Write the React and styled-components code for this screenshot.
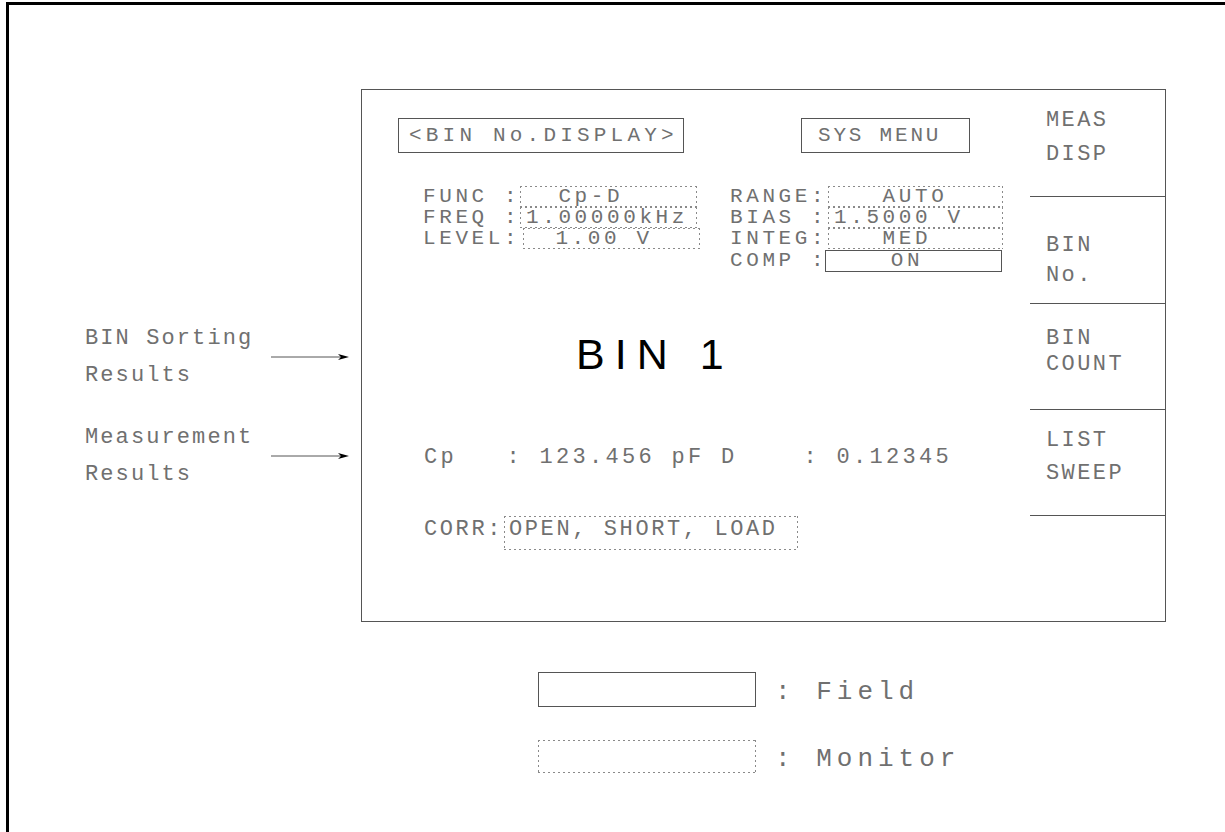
import React from 'react'
import styled, { createGlobalStyle, css } from 'styled-components'

const GlobalStyle = createGlobalStyle`
  html, body {
    margin: 0;
    padding: 0;
    background: #fff;
    overflow: hidden;
  }
  body {
    font-family: "Liberation Mono", "DejaVu Sans Mono", monospace;
    color: #707070;
  }
`

// dotted outline used for "monitor" boxes
const dotted = css`
  background-image:
    repeating-linear-gradient(90deg, #8a8a8a 0 2px, transparent 2px 5px),
    repeating-linear-gradient(90deg, #8a8a8a 0 2px, transparent 2px 5px),
    repeating-linear-gradient(180deg, #8a8a8a 0 2px, transparent 2px 5px),
    repeating-linear-gradient(180deg, #8a8a8a 0 2px, transparent 2px 5px);
  background-size: 100% 1px, 100% 1px, 1px 100%, 1px 100%;
  background-position: 0 0, 0 100%, 0 0, 100% 0;
  background-repeat: no-repeat;
`

const Frame = styled.div`
  margin: 2px 0 0 6px;
  height: 830px;
  box-sizing: border-box;
  border-left: 3px solid #000;
  border-top: 3px solid #000;
`

const Top = styled.div`
  display: flex;
  margin-top: 84px;
`

const Annotations = styled.div`
  width: 352px;
  flex-shrink: 0;
  box-sizing: border-box;
  padding: 231px 0 0 76px;
`

const AnnGroup = styled.div`
  display: flex;
  align-items: center;
  margin-top: ${(p) => p.$gap || 0}px;
`

const AnnText = styled.div`
  width: 186px;
  font-size: 22px;
  line-height: 37px;
  letter-spacing: 2.1px;
  white-space: pre;
`

const Display = styled.div`
  display: flex;
  width: 805px;
  height: 533px;
  box-sizing: border-box;
  border: 1px solid #555;
`

const Main = styled.div`
  width: 668px;
  box-sizing: border-box;
  padding: 28px 0 0 36px;
`

const Header = styled.div`
  display: flex;
`

const HeadBox = styled.div`
  width: ${(p) => p.$w}px;
  height: 35px;
  margin-left: ${(p) => p.$ml || 0}px;
  box-sizing: border-box;
  border: 1px solid #555;
  display: flex;
  align-items: center;
  padding-left: ${(p) => p.$pl}px;
  font-size: 21px;
  letter-spacing: ${(p) => p.$ls}px;
  white-space: pre;
`

const Params = styled.div`
  display: flex;
  margin: 33px 0 0 25px;
`

const ParamCol = styled.div`
  margin-left: ${(p) => p.$ml || 0}px;
`

const ParamRow = styled.div`
  display: flex;
  height: ${(p) => p.$h || 21}px;
  margin-top: ${(p) => p.$mt || 0}px;
  font-size: 21px;
  letter-spacing: 3.6px;
  white-space: pre;
`

const ParamLabel = styled.div`
  width: ${(p) => p.$w}px;
  line-height: ${(p) => p.$lh || 21}px;
`

const Monitor = styled.div`
  ${dotted};
  width: ${(p) => p.$w}px;
  height: ${(p) => p.$h || 21}px;
  box-sizing: border-box;
  padding-left: ${(p) => p.$pl ?? 6}px;
  line-height: ${(p) => p.$lh || 21}px;
  white-space: pre;
`

const Field = styled.div`
  width: ${(p) => p.$w}px;
  height: ${(p) => p.$h}px;
  box-sizing: border-box;
  border: 1px solid #555;
  padding-left: ${(p) => p.$pl || 0}px;
  line-height: ${(p) => p.$h - 2}px;
  white-space: pre;
`

const BigBin = styled.div`
  margin: 61px 0 0 178px;
  font-family: "Liberation Sans", Arial, sans-serif;
  font-size: 43px;
  line-height: 43px;
  letter-spacing: 10px;
  color: #000;
`

const MeasRow = styled.div`
  margin: 68px 0 0 26px;
  font-size: 22px;
  line-height: 28px;
  letter-spacing: 3.3px;
  white-space: pre;
`

const CorrRow = styled.div`
  display: flex;
  align-items: flex-start;
  margin: 44px 0 0 26px;
  font-size: 22px;
  letter-spacing: 2.6px;
  white-space: pre;
`

const Softkeys = styled.div`
  width: 135px;
`

const Softkey = styled.div`
  height: ${(p) => p.$h}px;
  box-sizing: border-box;
  border-bottom: ${(p) => (p.$last ? 'none' : '1px solid #555')};
  padding: ${(p) => p.$pt}px 0 0 16px;
  font-size: 22px;
  line-height: ${(p) => p.$lh || 32}px;
  letter-spacing: 2.4px;
  white-space: pre;
`

const Legend = styled.div`
  margin: 49px 0 0 529px;
`

const LegendRow = styled.div`
  display: flex;
  align-items: center;
  margin-top: ${(p) => p.$mt || 0}px;
`

const LegendText = styled.div`
  margin-left: 19px;
  padding-top: 6px;
  font-size: 26px;
  letter-spacing: 5px;
  white-space: pre;
`

function Arrow() {
  return (
    <svg width="80" height="10" viewBox="0 0 80 10">
      <line x1="0" y1="5" x2="70" y2="5" stroke="#555" strokeWidth="1" />
      <polygon points="67,2 78,5 67,8 70,5" fill="#000" />
    </svg>
  )
}

function App() {
  return (
    <>
      <GlobalStyle />
      <Frame>
        <Top>
          <Annotations>
            <AnnGroup>
              <AnnText>{'BIN Sorting\nResults'}</AnnText>
              <Arrow />
            </AnnGroup>
            <AnnGroup $gap={25}>
              <AnnText>{'Measurement\nResults'}</AnnText>
              <Arrow />
            </AnnGroup>
          </Annotations>

          <Display>
            <Main>
              <Header>
                <HeadBox $w={286} $pl={10} $ls={4.2}>{'<BIN No.DISPLAY>'}</HeadBox>
                <HeadBox $w={169} $ml={117} $pl={16} $ls={2.8}>SYS MENU</HeadBox>
              </Header>

              <Params>
                <ParamCol>
                  <ParamRow>
                    <ParamLabel $w={97}>FUNC :</ParamLabel>
                    <Monitor $w={177}>{'  Cp-D'}</Monitor>
                  </ParamRow>
                  <ParamRow>
                    <ParamLabel $w={97}>FREQ :</ParamLabel>
                    <Monitor $w={177}>1.00000kHz</Monitor>
                  </ParamRow>
                  <ParamRow>
                    <ParamLabel $w={100}>LEVEL:</ParamLabel>
                    <Monitor $w={177} $pl={0}>{'  1.00 V'}</Monitor>
                  </ParamRow>
                </ParamCol>
                <ParamCol $ml={30}>
                  <ParamRow>
                    <ParamLabel $w={98}>RANGE:</ParamLabel>
                    <Monitor $w={175}>{'   AUTO'}</Monitor>
                  </ParamRow>
                  <ParamRow>
                    <ParamLabel $w={98}>BIAS :</ParamLabel>
                    <Monitor $w={175}>1.5000 V</Monitor>
                  </ParamRow>
                  <ParamRow>
                    <ParamLabel $w={98}>INTEG:</ParamLabel>
                    <Monitor $w={175}>{'   MED'}</Monitor>
                  </ParamRow>
                  <ParamRow $mt={1} $h={22}>
                    <ParamLabel $w={95} $lh={22}>COMP :</ParamLabel>
                    <Field $w={177} $h={22}>{'    ON'}</Field>
                  </ParamRow>
                </ParamCol>
              </Params>

              <BigBin>BIN 1</BigBin>

              <MeasRow>{'Cp   : 123.456 pF D    : 0.12345'}</MeasRow>

              <CorrRow>
                <ParamLabel $w={80} $lh={28}>CORR:</ParamLabel>
                <Monitor $w={294} $h={34} $pl={5} $lh={28}>OPEN, SHORT, LOAD</Monitor>
              </CorrRow>
            </Main>

            <Softkeys>
              <Softkey $h={107} $pt={14} $lh={34}>{'MEAS\nDISP'}</Softkey>
              <Softkey $h={107} $pt={34} $lh={30}>{'BIN\nNo.'}</Softkey>
              <Softkey $h={106} $pt={22} $lh={26}>{'BIN\nCOUNT'}</Softkey>
              <Softkey $h={106} $pt={14} $lh={33}>{'LIST\nSWEEP'}</Softkey>
              <Softkey $h={105} $pt={0} $last />
            </Softkeys>
          </Display>
        </Top>

        <Legend>
          <LegendRow>
            <Field $w={218} $h={35} />
            <LegendText>: Field</LegendText>
          </LegendRow>
          <LegendRow $mt={31}>
            <Monitor $w={218} $h={33} />
            <LegendText>: Monitor</LegendText>
          </LegendRow>
        </Legend>
      </Frame>
    </>
  )
}

export default App
